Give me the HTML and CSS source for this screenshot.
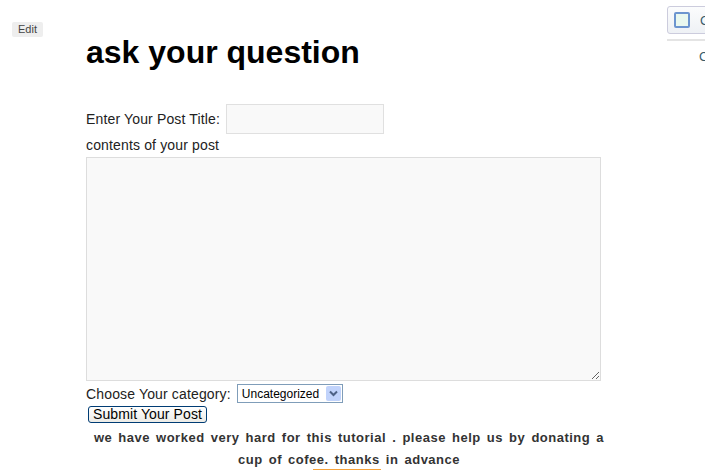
FILE: index.html
```html
<!DOCTYPE html>
<html>
<head>
<meta charset="utf-8">
<link rel="stylesheet" href="styles.css">
</head>
<body>
<div class="page">
  <div class="gutter">
    <span class="edit">Edit</span>
  </div>
  <div class="main">
    <h1 class="title">ask your question</h1>
    <form class="post-form">
      <div class="row title-row">
        <label class="lbl">Enter Your Post Title:</label>
        <input class="text-input" type="text">
      </div>
      <div class="lbl contents-lbl">contents of your post</div>
      <textarea class="content-area"></textarea>
      <div class="row cat-row">
        <label class="lbl">Choose Your category:</label>
        <span class="select">
          <span class="select-text">Uncategorized</span>
          <span class="select-btn">
            <svg width="9" height="7" viewBox="0 0 9 7"><path d="M1 1.5 L4.5 5 L8 1.5" fill="none" stroke="#4d6185" stroke-width="2"/></svg>
          </span>
        </span>
      </div>
      <div class="submit-row"><span class="submit">Submit Your Post</span></div>
    </form>
    <p class="donate">we have worked very hard for this tutorial . please help us by donating a cup of cofee. thanks in advance</p>
    <div class="donate-btn"></div>
  </div>
  <div class="sidebar">
    <div class="widget">
      <span class="check"></span>
      <span class="wtext">C</span>
    </div>
    <div class="sep"></div>
    <div class="wtext2">C</div>
  </div>
</div>
</body>
</html>
```

FILE: styles.css
```css
html, body {
  margin: 0;
  padding: 0;
  background: #fff;
  overflow: hidden;
}
body {
  width: 705px;
  height: 470px;
  font-family: "Liberation Sans", Arial, sans-serif;
  color: #333;
}
.page {
  display: flex;
  align-items: flex-start;
}
.gutter {
  width: 74px;
  padding: 22px 0 0 12px;
  flex: none;
  display: flex;
  align-items: flex-start;
}
.edit {
  display: block;
  background: #eee;
  color: #444;
  font-size: 11px;
  line-height: 15px;
  padding: 0 6px;
  border-radius: 2px;
}
.main {
  width: 526px;
  flex: none;
}
.title {
  margin: 34px 0 0;
  font-size: 32px;
  line-height: 36px;
  font-weight: bold;
  color: #000;
}
.post-form {
  margin-top: 34px;
}
.row {
  display: flex;
  align-items: center;
}
.lbl {
  font-size: 14px;
  color: #222;
  letter-spacing: 0.15px;
}
.title-row .lbl {
  margin-right: 6px;
}
.text-input {
  box-sizing: border-box;
  width: 158px;
  height: 30px;
  border: 1px solid #e0e0e0;
  background: #f9f9f9;
  margin: 0;
  padding: 0;
}
.contents-lbl {
  margin-top: 2px;
  line-height: 18px;
}
.content-area {
  display: block;
  box-sizing: border-box;
  width: 515px;
  height: 224px;
  margin: 3px 0 0;
  border: 1px solid #ddd;
  background: #f9f9f9;
  resize: vertical;
}
.cat-row {
  margin-top: 3px;
}
.cat-row .lbl {
  margin-right: 6px;
}
.select {
  display: inline-flex;
  align-items: center;
  box-sizing: border-box;
  width: 106px;
  height: 19px;
  border: 1px solid #7f9db9;
  background: #fff;
  padding: 0 1px 0 4px;
}
.select-text {
  flex: 1;
  font-size: 12px;
  color: #000;
}
.select-btn {
  width: 15px;
  height: 15px;
  background: #c1d3fb;
  border-radius: 2px;
  display: flex;
  align-items: center;
  justify-content: center;
}
.submit-row {
  margin-top: 2px;
  padding-left: 2px;
}
.submit {
  display: inline-block;
  font-size: 14px;
  line-height: 15px;
  color: #000;
  padding: 0 4px;
  letter-spacing: 0.1px;
  border: 1px solid #003c74;
  border-radius: 3px;
  background: linear-gradient(#fff, #ecebe6);
}
.donate {
  margin: 4px 0 0;
  text-align: center;
  font-size: 13px;
  font-weight: bold;
  line-height: 22px;
  letter-spacing: 0.5px;
  word-spacing: 2px;
  color: #333;
}
.donate-btn {
  width: 68px;
  height: 20px;
  margin: -2px 0 0 227px;
  border-top: 2px solid #f5a23a;
}
.sidebar {
  margin-left: 55px;
  width: 100px;
  flex: none;
}
.widget {
  margin-top: 6px;
  height: 26px;
  border: 1px solid #ccd;
  border-radius: 3px;
  background: linear-gradient(#fbfcfd, #eef1f5);
  display: flex;
  align-items: center;
  padding-left: 6px;
}
.check {
  width: 12px;
  height: 12px;
  border: 2px solid #6d95cf;
  border-radius: 2px;
  background: #eaf8ef;
}
.wtext {
  margin-left: 10px;
  font-size: 13px;
  color: #3a5a6a;
}
.sep {
  margin-top: 5px;
  border-top: 2px solid #e4e4e4;
}
.wtext2 {
  margin: 8px 0 0 32px;
  font-size: 13px;
  color: #3a5a6a;
}
```
